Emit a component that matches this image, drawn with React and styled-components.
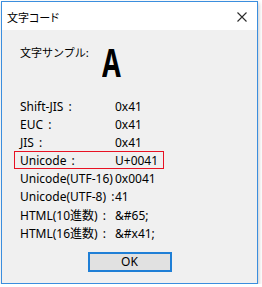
import React from 'react';
import styled, { createGlobalStyle } from 'styled-components';

const GlobalStyle = createGlobalStyle`
  html, body {
    margin: 0;
    padding: 0;
    background: #ffffff;
  }
  body {
    font-family: "Noto Sans", "Noto Sans CJK JP", sans-serif;
    color: #000;
  }
`;

const rows = [
  { label: 'Shift-JIS :', value: '0x41' },
  { label: 'EUC :', value: '0x41' },
  { label: 'JIS :', value: '0x41' },
  { label: 'Unicode :', value: 'U+0041', selected: true },
  { label: 'Unicode(UTF-16)', value: '0x0041' },
  { label: 'Unicode(UTF-8) :', value: '41' },
  { label: 'HTML(10進数) :', value: '&#65;' },
  { label: 'HTML(16進数) :', value: '&#x41;' },
];

const App = () => {
  return (
    <>
      <GlobalStyle />
      <Window>
        <TitleBar>
          <Title>文字コード</Title>
          <CloseButton aria-label="閉じる">
            <svg width="10" height="10" viewBox="0 0 10 10">
              <path d="M0.5 0.5 L9.5 9.5 M9.5 0.5 L0.5 9.5" stroke="#2b2b2b" strokeWidth="1.1" fill="none" />
            </svg>
          </CloseButton>
        </TitleBar>
        <Body>
          <Sample>
            <SampleLabel>文字サンプル:</SampleLabel>
            <SampleGlyph>A</SampleGlyph>
          </Sample>
          <CodeList>
            {rows.map((r) => (
              <CodeRow key={r.label} $selected={r.selected}>
                <Label>{r.label}</Label>
                <Value>{r.value}</Value>
              </CodeRow>
            ))}
          </CodeList>
          <Footer>
            <OkButton>OK</OkButton>
          </Footer>
        </Body>
      </Window>
    </>
  );
};

const Window = styled.div`
  margin: 1px 0 0 1px;
  width: 257px;
  height: 283px;
  box-sizing: border-box;
  border: 1px solid #3b8ede;
  display: flex;
  flex-direction: column;
  box-shadow: 1px 2px 4px rgba(0, 0, 0, 0.22);
`;

const TitleBar = styled.div`
  height: 28px;
  background: #ffffff;
  display: flex;
  align-items: center;
  justify-content: space-between;
  padding: 0 10px 0 5px;
`;

const Title = styled.span`
  font-family: "Noto Sans CJK JP", sans-serif;
  font-size: 11px;
  font-feature-settings: "palt";
  color: #000;
  padding-top: 2px;
`;

const CloseButton = styled.div`
  width: 10px;
  height: 10px;
  display: flex;
  margin-top: 2px;
`;

const Body = styled.div`
  flex: 1;
  background: #f0f0f0;
  display: flex;
  flex-direction: column;
  padding: 14px 0 0 0;
`;

const Sample = styled.div`
  display: flex;
  align-items: flex-start;
  padding-left: 18px;
  height: 53px;
`;

const SampleLabel = styled.span`
  font-family: "Noto Sans CJK JP", sans-serif;
  font-size: 11px;
  line-height: 15px;
  width: 82px;
  padding-top: 1px;
`;

const SampleGlyph = styled.span`
  display: inline-block;
  font-family: "Noto Sans", sans-serif;
  font-weight: 700;
  font-size: 40px;
  line-height: 40px;
  transform: scaleX(0.68);
  transform-origin: left top;
  margin-top: -2px;
`;

const CodeList = styled.div`
  display: flex;
  flex-direction: column;
  padding-left: 12px;
`;

const CodeRow = styled.div`
  display: grid;
  grid-template-columns: 95px auto;
  align-items: center;
  width: 150px;
  height: 18px;
  box-sizing: border-box;
  padding-left: 5px;
  border: 1px solid ${(p) => (p.$selected ? '#e81123' : 'transparent')};
  font-size: 12px;
  white-space: nowrap;
`;

const Label = styled.span`
  word-spacing: 2px;
`;

const Value = styled.span``;

const Footer = styled.div`
  display: flex;
  justify-content: center;
  margin-top: 11px;
`;

const OkButton = styled.button`
  width: 84px;
  height: 20px;
  box-sizing: border-box;
  border: 2px solid #1f7fd6;
  background: #e1e1e1;
  font-family: "Noto Sans", sans-serif;
  font-size: 12px;
  color: #000;
  padding: 0;
  line-height: 16px;
`;

export default App;
